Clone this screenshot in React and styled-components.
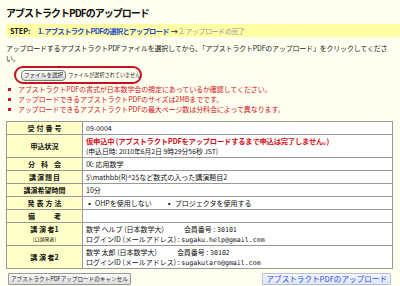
import React from 'react';
import styled, { createGlobalStyle } from 'styled-components';

const GlobalStyle = createGlobalStyle`
  html, body {
    margin: 0;
    padding: 0;
    background: #fffff0;
  }
  body {
    font-family: "Noto Sans CJK JP", "Liberation Sans", sans-serif;
    color: #222;
  }
`;

const Page = styled.div`
  width: 400px;
  height: 286px;
  overflow: hidden;
  padding: 6px 0 0 6px;
  box-sizing: border-box;
`;

const Title = styled.h1`
  margin: 0 0 4px 0;
  font-size: 10px;
  letter-spacing: -1px;
  line-height: 14px;
  font-weight: bold;
  color: #111;
`;

const StepBar = styled.div`
  display: flex;
  align-items: center;
  height: 13px;
  padding-left: 4px;
  background: #ffffa6;
  font-size: 7.2px;
  font-weight: bold;
  letter-spacing: -0.6px;
`;

const StepLabel = styled.span`
  color: #111;
  width: 28px;
  letter-spacing: 0;
`;

const Step = styled.span`
  color: ${p => (p.$active ? '#2244cc' : '#999')};
  font-weight: ${p => (p.$active ? 'bold' : 'normal')};
`;

const Arrow = styled.span`
  color: #333;
  margin: 0 2px;
`;

const Intro = styled.p`
  margin: 6px 7px 0 0;
  font-size: 7px;
  letter-spacing: -0.2px;
  line-height: 10px;
  color: #222;
`;

const FileOval = styled.div`
  display: flex;
  align-items: center;
  gap: 2px;
  margin: 3px 0 0 8px;
  height: 14px;
  width: 114px;
  padding: 0 5px;
  border: 2px solid #c8101e;
  border-radius: 9px;
  font-size: 5.2px;
  line-height: 8px;
  white-space: nowrap;
`;

const FileButton = styled.span`
  display: inline-block;
  padding: 0 2px;
  line-height: 9px;
  border: 1px solid #777;
  border-radius: 4px;
  background: linear-gradient(#fff, #ddd);
  font-size: 5.6px;
  color: #222;
`;

const Notes = styled.ul`
  margin: 0;
  padding: 0 0 0 2px;
  list-style: none;
`;

const Note = styled.li`
  display: flex;
  align-items: center;
  gap: 7px;
  height: 10px;
  font-size: 7px;
  letter-spacing: -0.1px;
  line-height: 10px;
  color: #d4141c;
  &::before {
    content: '';
    width: 3px;
    height: 3px;
    background: #d4141c;
  }
`;

const Table = styled.table`
  margin: 7px 0 0 0;
  width: 387px;
  border-collapse: collapse;
  border: 1px solid #777;
  background: #fff;
  font-size: 7px;
`;

const Label = styled.th`
  width: 41px;
  padding: 1px 2px;
  background: #ffffc8;
  border: 1px solid #999;
  font-weight: bold;
  letter-spacing: ${p => p.$spread || 0}px;
  text-indent: ${p => p.$spread || 0}px;
  white-space: nowrap;
  text-align: center;
  color: #111;
  line-height: ${p => p.$lh || 10}px;
`;

const Cell = styled.td`
  padding: 1px 3px;
  border: 1px solid #999;
  line-height: 10px;
  color: #111;
  height: ${p => p.$h || 10}px;
  white-space: nowrap;
`;

const Red = styled.div`
  color: #d4141c;
  font-weight: bold;
  font-size: 7.4px;
  letter-spacing: -0.3px;
`;

const Small = styled.div`
  font-size: 6.8px;
`;

const Mono = styled.span`
  font-family: "DejaVu Sans Mono", "Liberation Mono", monospace;
  font-size: 6.6px;
  line-height: 1;
`;

const Method = styled.span`
  margin-right: 14px;
  &::before {
    content: '▪';
    margin-right: 2px;
  }
`;

const Note2 = styled.span`
  font-size: 5px;
  font-weight: normal;
  line-height: 1;
`;

const Actions = styled.div`
  display: flex;
  justify-content: space-between;
  align-items: center;
  margin: 4px 9px 0 2px;
`;

const Button = styled.button`
  font-family: inherit;
  font-size: ${p => (p.$primary ? 7.6 : 5.6)}px;
  line-height: ${p => (p.$primary ? 10 : 8)}px;
  padding: ${p => (p.$primary ? '0 3px' : '1px 2px')};
  color: ${p => (p.$primary ? '#2a4fe0' : '#222')};
  background: ${p => (p.$primary ? 'linear-gradient(#f4f6ff, #dfe5f5)' : 'linear-gradient(#fafafa, #dcdcdc)')};
  border: 1px solid ${p => (p.$primary ? '#b8c0d8' : '#999')};
  border-radius: 1px;
  cursor: pointer;
`;

const Gap = styled.span`
  display: inline-block;
  width: 20px;
`;

const App = () => (
  <>
    <GlobalStyle />
    <Page>
      <Title>アブストラクトPDFのアップロード</Title>
      <StepBar>
        <StepLabel>STEP:</StepLabel>
        <span>
          <Step $active>1. アブストラクトPDFの選択とアップロード</Step>
          <Arrow>→</Arrow>
          <Step>2. アップロードの完了</Step>
        </span>
      </StepBar>
      <Intro>
        アップロードするアブストラクトPDFファイルを選択してから、「アブストラクトPDFのアップロード」をクリックしてください。
      </Intro>
      <FileOval>
        <FileButton>ファイルを選択</FileButton>
        ファイルが選択されていません
      </FileOval>
      <Notes>
        <Note>アブストラクトPDFの書式が日本数学会の規定にあっているか確認してください。</Note>
        <Note>アップロードできるアブストラクトPDFのサイズは2MBまでです。</Note>
        <Note>アップロードできるアブストラクトPDFの最大ページ数は分科会によって異なります。</Note>
      </Notes>
      <Table>
        <tbody>
          <tr>
            <Label $spread={2}>受付番号</Label>
            <Cell>09-0004</Cell>
          </tr>
          <tr>
            <Label>申込状況</Label>
            <Cell>
              <Red>仮申込中 (アブストラクトPDFをアップロードするまで申込は完了しません。)</Red>
              <Small>(申込日時: 2010年6月2日 9時29分56秒 JST)</Small>
            </Cell>
          </tr>
          <tr>
            <Label $spread={6}>分科会</Label>
            <Cell>IX: 応用数学</Cell>
          </tr>
          <tr>
            <Label $spread={1}>講演題目</Label>
            <Cell>$\mathbb{'{'}R{'}'}^2$など数式の入った講演題目2</Cell>
          </tr>
          <tr>
            <Label>講演希望時間</Label>
            <Cell>10分</Cell>
          </tr>
          <tr>
            <Label $spread={2}>発表方法</Label>
            <Cell>
              <Method>OHPを使用しない</Method>
              <Method>プロジェクタを使用する</Method>
            </Cell>
          </tr>
          <tr>
            <Label $spread={19}>備考</Label>
            <Cell />
          </tr>
          <tr>
            <Label $lh={9}>
              講 演 者1
              <br />
              <Note2>(口頭発表)</Note2>
            </Label>
            <Cell $h={20}>
              数学 ヘルプ (日本数学大)<Gap />会員番号 : <Mono>30101</Mono>
              <br />
              ログインID (メールアドレス) : <Mono>sugaku.help@gmail.com</Mono>
            </Cell>
          </tr>
          <tr>
            <Label>講 演 者2</Label>
            <Cell $h={18}>
              数学 太郎 (日本数学大)<Gap />会員番号 : <Mono>30102</Mono>
              <br />
              ログインID (メールアドレス) : <Mono>sugakutaro@gmail.com</Mono>
            </Cell>
          </tr>
        </tbody>
      </Table>
      <Actions>
        <Button>アブストラクトPDFアップロードのキャンセル</Button>
        <Button $primary>アブストラクトPDFのアップロード</Button>
      </Actions>
    </Page>
  </>
);

export default App;
